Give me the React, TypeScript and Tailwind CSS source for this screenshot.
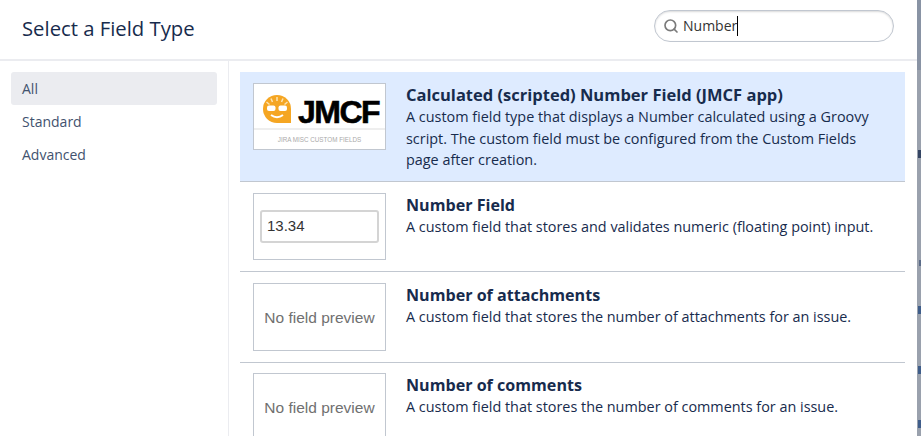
import { Search } from 'lucide-react';

const font = { fontFamily: '"Open Sans", "Noto Sans", sans-serif' };

function JmcfLogo() {
  return (
    <div className="w-[133px] h-[67px] shrink-0 border border-[#c1c7d0] bg-white flex flex-col">
      <div className="h-[46px] flex items-center pt-[6px] pl-[8px] gap-[6px] border-b-2 border-[#eeeeee]">
        <svg width="30" height="30" viewBox="0 0 30 30">
          <path d="M15 1a14 14 0 1 0 0 28h14v-14A14 14 0 0 0 15 1z" fill="#f5a623" />
          <path d="M15 3v4M9 4.500l1.500 3.500M21 4.500l-1.500 3.500M4.500 8l3 2.500M25.500 8l-3 2.500" stroke="#fde3b0" strokeWidth="1.500" />
          <rect x="5" y="11.500" width="8.500" height="5.500" rx="2" fill="#fff" />
          <rect x="16.500" y="11.500" width="8.500" height="5.500" rx="2" fill="#fff" />
          <path d="M9 21q6 4.500 12 0" fill="none" stroke="#fff" strokeWidth="2" />
        </svg>
        <span className="mt-[6px] text-[32px] font-bold text-black tracking-[-1.5px] leading-none [-webkit-text-stroke:0.6px_black] font-['Liberation_Sans',sans-serif]">JMCF</span>
      </div>
      <div className="flex-1 flex items-center justify-center text-[6.300px] text-[#aaaaaa] font-['Liberation_Sans',sans-serif]">
        JIRA MISC CUSTOM FIELDS
      </div>
    </div>
  );
}

function NumberPreview() {
  return (
    <div className="w-[133px] h-[67px] shrink-0 border border-[#c1c7d0] bg-white flex items-center px-[6px]">
      <div className="w-full h-[33px] border-2 border-[#d4d4d4] rounded-[3px] flex items-center pl-[5px] text-[15px] text-[#333333] font-['Liberation_Sans',sans-serif]">
        13.34
      </div>
    </div>
  );
}

function NoPreview() {
  return (
    <div className="w-[133px] h-[68px] shrink-0 border border-[#c1c7d0] bg-white flex items-center justify-center pt-px text-[15.500px] text-[#707070] font-['Liberation_Sans',sans-serif]">
      No field preview
    </div>
  );
}

function Row({ preview, title, lines, active, last, className }: { preview: React.ReactNode; title: string; lines: string[]; active?: boolean; last?: boolean; className: string }) {
  return (
    <div className={`flex gap-[20px] pl-[13px] ${className} ${last ? '' : 'border-b border-[#c1c7d0]'} ${active ? 'bg-[#deebff]' : ''}`}>
      {preview}
      <div className="min-w-0 pt-px">
        <h3 className={`${active ? 'text-[16.500px]' : 'text-[16.100px]'} leading-[22px] font-bold text-[#172b4d]`}>{title}</h3>
        {lines.map((l) => (
          <p key={l} className="text-[14.400px] leading-[21.500px] text-[#172b4d] whitespace-nowrap">{l}</p>
        ))}
      </div>
    </div>
  );
}

export default function App() {
  return (
    <div className="w-[921px] h-[436px] overflow-hidden bg-[#9aa1ad] flex" style={font}>
      <div className="w-[917px] h-full bg-white flex flex-col shrink-0">
        <div className="h-[61px] shrink-0 border-b-2 border-[#ebecf0] flex justify-between pl-[22px] pr-[23px]">
          <h2 className="text-[20.300px] leading-[56px] text-[#172b4d]">Select a Field Type</h2>
          <div className="w-[240px] h-[32px] mt-[10px] rounded-full border border-[#c1c7d0] shadow-[inset_0_1px_2px_rgba(0,0,0,0.15)] flex items-center pl-[8px] gap-[4px]">
            <Search size={16} strokeWidth={2.5} className="text-[#7a7a7a]" />
            <span className="text-[14px] text-[#333333] border-r border-black leading-[20px]">Number</span>
          </div>
        </div>
        <div className="flex flex-1 min-h-0">
          <div className="w-[229px] shrink-0 border-r border-[#ebecf0] pt-[11px] px-[11px] flex flex-col">
            <div className="h-[33px] rounded-[3px] bg-[#ebecf0] flex items-center pl-[11px] text-[14px] text-[#42526e]">All</div>
            <div className="h-[33px] flex items-center pl-[11px] text-[14px] text-[#42526e]">Standard</div>
            <div className="h-[33px] flex items-center pl-[11px] text-[14px] text-[#42526e]">Advanced</div>
          </div>
          <div className="flex-1 min-w-0 pt-[11px] pl-[11px] pr-[12px]">
            <Row
              active
              className="h-[110px] pt-[11px]"
              preview={<JmcfLogo />}
              title="Calculated (scripted) Number Field (JMCF app)"
              lines={[
                'A custom field type that displays a Number calculated using a Groovy',
                'script. The custom field must be configured from the Custom Fields',
                'page after creation.',
              ]}
            />
            <Row
              className="h-[90px] pt-[11px]"
              preview={<NumberPreview />}
              title="Number Field"
              lines={['A custom field that stores and validates numeric (floating point) input.']}
            />
            <Row
              className="h-[91px] pt-[11px]"
              preview={<NoPreview />}
              title="Number of attachments"
              lines={['A custom field that stores the number of attachments for an issue.']}
            />
            <Row
              last
              className="pt-[10px]"
              preview={<NoPreview />}
              title="Number of comments"
              lines={['A custom field that stores the number of comments for an issue.']}
            />
          </div>
        </div>
      </div>
      {/* sliver of the page behind the dialog */}
      <div className="w-[4px] h-full flex flex-col">
        <div className="h-[70px] bg-[#8993a4]" />
        <div className="h-[80px]" />
        <div className="h-[8px] ml-[1px] bg-[#344563]" />
        <div className="h-[102px]" />
        <div className="h-[6px] ml-[2px] bg-[#5b6b88]" />
        <div className="h-[40px]" />
        <div className="h-[8px] ml-[1px] bg-[#3f5d8a]" />
        <div className="h-[52px]" />
        <div className="h-[8px] ml-[1px] bg-[#3f5d8a]" />
        <div className="h-[46px]" />
        <div className="h-[8px] ml-[1px] bg-[#3f5d8a]" />
      </div>
    </div>
  );
}
